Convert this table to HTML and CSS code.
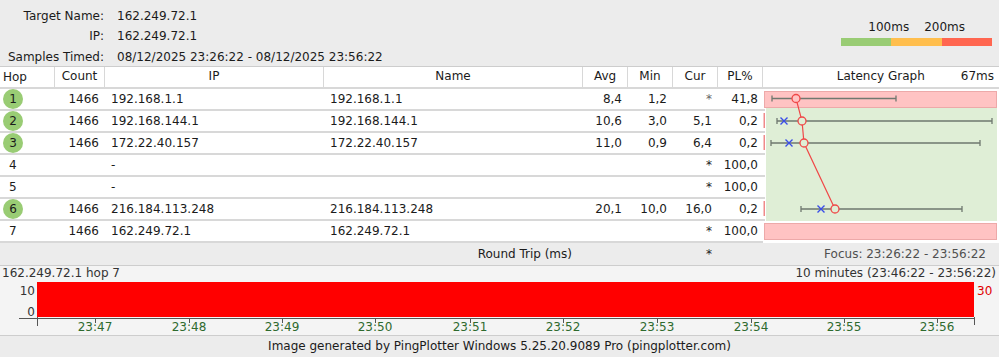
FILE: index.html
```html
<!DOCTYPE html>
<html>
<head>
<meta charset="utf-8">
<link rel="stylesheet" href="styles.css">
</head>
<body>
<div class="page">
  <div class="top">
    <div class="info">
      <div class="lbl">Target Name:</div><div class="val">162.249.72.1</div>
      <div class="lbl">IP:</div><div class="val">162.249.72.1</div>
      <div class="lbl">Samples Timed:</div><div class="val">08/12/2025 23:26:22 - 08/12/2025 23:56:22</div>
    </div>
    <div class="legend">
      <div class="legend-labels"><span>100ms</span><span>200ms</span></div>
      <div class="legend-bar"><i class="g"></i><i class="o"></i><i class="r"></i></div>
    </div>
  </div>

  <div class="thead">
    <div class="c hop ctr">Hop</div>
    <div class="c cnt ctr">Count</div>
    <div class="c ip ctr">IP</div>
    <div class="c name ctr">Name</div>
    <div class="c num ctr">Avg</div>
    <div class="c num ctr">Min</div>
    <div class="c num ctr">Cur</div>
    <div class="c num ctr">PL%</div>
    <div class="c graphh"><span>Latency Graph</span><span class="ms">67ms</span></div>
  </div>

  <div class="tbody">
    <div class="rows">
      <div class="row"><div class="c hop"><span class="dot">1</span></div><div class="c cnt r">1466</div><div class="c ip">192.168.1.1</div><div class="c name">192.168.1.1</div><div class="c num r">8,4</div><div class="c num r">1,2</div><div class="c num r star">*</div><div class="c num r">41,8</div></div>
      <div class="row"><div class="c hop"><span class="dot">2</span></div><div class="c cnt r">1466</div><div class="c ip">192.168.144.1</div><div class="c name">192.168.144.1</div><div class="c num r">10,6</div><div class="c num r">3,0</div><div class="c num r">5,1</div><div class="c num r">0,2</div></div>
      <div class="row"><div class="c hop"><span class="dot">3</span></div><div class="c cnt r">1466</div><div class="c ip">172.22.40.157</div><div class="c name">172.22.40.157</div><div class="c num r">11,0</div><div class="c num r">0,9</div><div class="c num r">6,4</div><div class="c num r">0,2</div></div>
      <div class="row"><div class="c hop"><span class="plain">4</span></div><div class="c cnt r"></div><div class="c ip">-</div><div class="c name"></div><div class="c num r"></div><div class="c num r"></div><div class="c num r">*</div><div class="c num r">100,0</div></div>
      <div class="row"><div class="c hop"><span class="plain">5</span></div><div class="c cnt r"></div><div class="c ip">-</div><div class="c name"></div><div class="c num r"></div><div class="c num r"></div><div class="c num r">*</div><div class="c num r">100,0</div></div>
      <div class="row"><div class="c hop"><span class="dot">6</span></div><div class="c cnt r">1466</div><div class="c ip">216.184.113.248</div><div class="c name">216.184.113.248</div><div class="c num r">20,1</div><div class="c num r">10,0</div><div class="c num r">16,0</div><div class="c num r">0,2</div></div>
      <div class="row"><div class="c hop"><span class="plain">7</span></div><div class="c cnt r">1466</div><div class="c ip">162.249.72.1</div><div class="c name">162.249.72.1</div><div class="c num r"></div><div class="c num r"></div><div class="c num r">*</div><div class="c num r">100,0</div></div>
    </div>
    <div class="graph">
      <svg width="236" height="154" viewBox="0 0 236 154">
        <g fill="#d8d8d8">
          <rect x="0" y="20" width="2" height="2"/>
          <rect x="0" y="42" width="2" height="2"/>
          <rect x="0" y="64" width="2" height="2"/>
          <rect x="0" y="86" width="2" height="2"/>
          <rect x="0" y="108" width="2" height="2"/>
          <rect x="0" y="130" width="2" height="2"/>
        </g>
        <rect x="3" y="19" width="231" height="113" fill="#dfeed6"/>
        <rect x="1.5" y="2.5" width="232" height="16" fill="#ffc3c3" stroke="#eda9a9"/>
        <rect x="1.5" y="134.5" width="232" height="16" fill="#ffc3c3" stroke="#eda9a9"/>
        <rect x="0.5" y="24" width="1.5" height="15" fill="#f08a8a"/>
        <rect x="0.5" y="46" width="1.5" height="15" fill="#f08a8a"/>
        <rect x="0.5" y="112" width="1.5" height="15" fill="#f08a8a"/>
        <g stroke="#6f786f" stroke-width="1.3" fill="none">
          <path d="M9 9.5H133M9 6.5V12.5M133 6.5V12.5"/>
          <path d="M14 32H229M14 29V35M229 29V35"/>
          <path d="M8 54H217M8 51V57M217 51V57"/>
          <path d="M38 120H199M38 117V123M199 117V123"/>
        </g>
        <polyline points="33,9.5 39,32 41,54 72,120" fill="none" stroke="#f04848" stroke-width="1.2"/>
        <g stroke="#3a4de8" stroke-width="1.4">
          <path d="M17.5 28.5l7 7M24.5 28.5l-7 7"/>
          <path d="M22.5 50.5l7 7M29.5 50.5l-7 7"/>
          <path d="M54.5 116.5l7 7M61.5 116.5l-7 7"/>
        </g>
        <g stroke="#f04848" stroke-width="1.3">
          <circle cx="33" cy="9.5" r="4" fill="#ffc3c3"/>
          <circle cx="39" cy="32" r="4" fill="#dfeed6"/>
          <circle cx="41" cy="54" r="4" fill="#dfeed6"/>
          <circle cx="72" cy="120" r="4" fill="#dfeed6"/>
        </g>
      </svg>
    </div>
  </div>

  <div class="rt">
    <div class="rt-label">Round Trip (ms)</div>
    <div class="rt-star">*</div>
    <div class="rt-focus">Focus: 23:26:22 - 23:56:22</div>
  </div>

  <div class="chart">
    <div class="chart-head"><span>162.249.72.1 hop 7</span><span>10 minutes (23:46:22 - 23:56:22)</span></div>
    <svg class="chart-svg" width="999" height="54" viewBox="0 281 999 54">
      <rect x="37" y="282" width="937" height="35" fill="#ff0000"/>
      <g stroke="#555" stroke-width="1" fill="none">
        <path d="M19 318.5H974.5M37.5 317V326M974.5 317V325"/>
        <path d="M95.5 318V323M189.5 318V323M282.5 318V323M375.5 318V323M470.5 318V323M563.5 318V323M657.5 318V323M751.5 318V323M844.5 318V323M937.5 318V323"/>
      </g>
      <g class="ylab">
        <text x="35" y="295" text-anchor="end">10</text>
        <text x="35" y="316" text-anchor="end">0</text>
      </g>
      <text class="ymax" x="977" y="295">30</text>
      <g class="tlab" text-anchor="middle">
        <text x="95" y="331">23:47</text>
        <text x="189" y="331">23:48</text>
        <text x="282" y="331">23:49</text>
        <text x="375" y="331">23:50</text>
        <text x="470" y="331">23:51</text>
        <text x="563" y="331">23:52</text>
        <text x="657" y="331">23:53</text>
        <text x="751" y="331">23:54</text>
        <text x="844" y="331">23:55</text>
        <text x="937" y="331">23:56</text>
      </g>
    </svg>
  </div>

  <div class="foot">Image generated by PingPlotter Windows 5.25.20.9089 Pro (pingplotter.com)</div>
</div>
</body>
</html>
```
FILE: styles.css
```css
* { box-sizing: border-box; }
html, body { margin: 0; padding: 0; }
body {
  width: 999px;
  height: 357px;
  overflow: hidden;
  background: #ececec;
  font-family: "DejaVu Sans", sans-serif;
  font-size: 12px;
  color: #1b1b1b;
}
.page { width: 999px; }

.top {
  height: 67px;
  display: flex;
  justify-content: space-between;
  border-bottom: 1px solid #cdcdcd;
}
.info {
  display: grid;
  grid-template-columns: 104px auto;
  column-gap: 13px;
  row-gap: 4px;
  padding-top: 9px;
  line-height: 15.5px;
}
.lbl { text-align: right; }
.legend {
  width: 170px;
  padding-top: 19px;
  padding-right: 7px;
}
.legend-labels {
  display: flex;
  justify-content: flex-end;
  gap: 15px;
  padding-right: 27px;
  height: 16px;
  line-height: 16px;
}
.legend-bar {
  margin-top: 3px;
  display: flex;
  height: 8px;
  width: 151px;
  margin-left: auto;
}
.legend-bar i { flex: 1; display: block; }
.legend-bar .g { background: #99cc74; }
.legend-bar .o { background: #ffbe4d; }
.legend-bar .r { background: #ff6650; }

.thead {
  display: flex;
  height: 22px;
  background: #fff;
  border-bottom: 2px solid #d8d8d8;
}
.thead .c {
  border-right: 1px solid #d8d8d8;
  line-height: 19px;
}
.c { flex: none; white-space: nowrap; overflow: hidden; }
.hop { width: 55px; }
.cnt { width: 50px; }
.ip { width: 219px; }
.name { width: 259px; }
.num { width: 45px; }
.ctr { text-align: center; }
.r { text-align: right; }
.thead .graphh {
  width: 236px;
  border-right: none;
  display: flex;
  justify-content: flex-end;
  gap: 36px;
  padding-right: 5px;
}

.tbody { display: flex; }
.rows { width: 763px; }
.row {
  display: flex;
  height: 22px;
  background: #fff;
  border-bottom: 2px solid #d8d8d8;
  line-height: 20px;
}
.row .cnt { padding-right: 6px; }
.row .ip { padding-left: 6px; }
.row .name { padding-left: 6px; }
.row .num { padding-right: 6px; }
.row .num:first-of-type { padding-right: 5px; }
.row .num:last-child { padding-right: 5px; }
.star { color: #666; }
.hop { display: flex; align-items: center; padding-left: 3px; }
.dot {
  width: 20px;
  height: 20px;
  border-radius: 50%;
  background: #99cc74;
  text-align: center;
  line-height: 20px;
}
.plain { padding-left: 6px; }
.graph { width: 236px; height: 154px; background: #fff; }
.graph svg { display: block; }

.rt {
  display: flex;
  height: 23px;
  line-height: 22px;
  border-bottom: 1px solid #cdcdcd;
}
.rt-label { width: 583px; text-align: right; padding-right: 11px; }
.rt-star { width: 135px; text-align: right; padding-right: 6px; }
.rt-focus { flex: 1; text-align: right; padding-right: 13px; color: #505050; }

.chart {
  background: #f4f4f4;
  height: 70px;
  border-bottom: 1px solid #cdcdcd;
}
.chart-head {
  display: flex;
  justify-content: space-between;
  height: 15px;
  line-height: 15px;
  padding: 0 3px 0 2px;
  color: #333;
}
.chart-svg { display: block; }
.chart-svg text { font-family: "DejaVu Sans", sans-serif; font-size: 12px; }
.ylab text { fill: #333; }
.ymax { fill: #e00000; }
.tlab text { fill: #2e6a2e; }

.foot {
  text-align: center;
  height: 21px;
  line-height: 21px;
}
```
